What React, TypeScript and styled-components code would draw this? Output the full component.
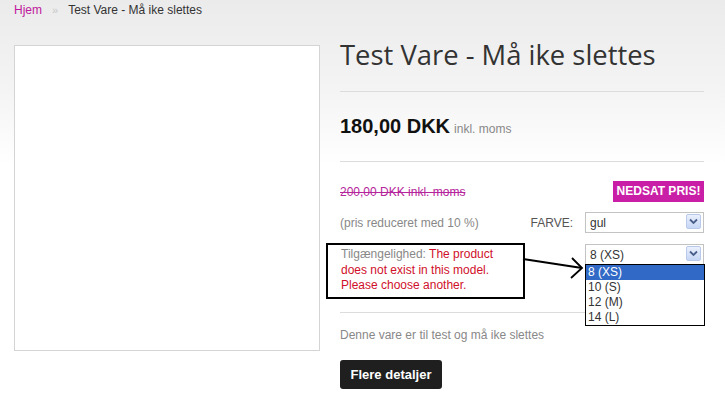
import React from 'react'
import styled, { createGlobalStyle } from 'styled-components'

const Global = createGlobalStyle`
  html, body { margin: 0; padding: 0; }
  body {
    background: linear-gradient(180deg, #ebebeb 0px, #f4f4f4 90px, #ffffff 165px, #ffffff 100%);
    font-family: "Liberation Sans", Arial, sans-serif;
    font-size: 12px;
    color: #333;
    min-height: 406px;
  }
`

const Page = styled.div`
  width: 725px;
  height: 406px;
  overflow: hidden;
  position: relative;
`

const Crumbs = styled.div`
  display: flex;
  align-items: center;
  gap: 10px;
  padding: 3px 14px 0;
  line-height: 15px;
  font-size: 12px;
  color: #333;
`

const CrumbLink = styled.a`
  color: #c0189c;
  text-decoration: none;
`

const CrumbSep = styled.span`
  color: #c8c8c8;
  font-size: 11px;
`

const Main = styled.div`
  display: flex;
  gap: 20px;
  padding: 27px 14px 0;
`

const ImageBox = styled.div`
  width: 304px;
  height: 304px;
  flex: none;
  background: #fff;
  border: 1px solid #d4d4d4;
`

const Info = styled.div`
  width: 364px;
  display: flex;
  flex-direction: column;
`

const Title = styled.h1`
  margin: -9px 0 0;
  font-family: "Open Sans", sans-serif;
  font-weight: 400;
  font-size: 27.4px;
  line-height: 38px;
  color: #333;
  white-space: nowrap;
`

const Rule = styled.hr<{ $top: number }>`
  border: 0;
  border-top: 1px solid #dcdcdc;
  margin: ${p => p.$top}px 0 0;
  height: 0;
`

const PriceRow = styled.div`
  display: flex;
  align-items: baseline;
  gap: 4px;
  margin-top: 22px;
  line-height: 24px;
`

const Price = styled.span`
  font-size: 20px;
  font-weight: 700;
  color: #111;
`

const Muted = styled.span`
  font-size: 12px;
  color: #888;
`

const Row = styled.div<{ $top: number }>`
  display: flex;
  align-items: center;
  justify-content: space-between;
  margin-top: ${p => p.$top}px;
`

const OldPrice = styled.span`
  color: #b5259b;
  text-decoration: line-through;
  font-size: 12px;
`

const Badge = styled.span`
  background: #c91fa6;
  color: #fff;
  font-weight: 700;
  font-size: 12px;
  line-height: 21px;
  width: 91px;
  white-space: nowrap;
  text-align: center;
`

const Note = styled.span`
  color: #888;
  font-size: 12px;
`

const Field = styled.div`
  display: flex;
  align-items: center;
  gap: 12px;
  color: #555;
`

const SelectBox = styled.div<{ $w: number }>`
  position: relative;
  width: ${p => p.$w}px;
  height: 21px;
  box-sizing: border-box;
  border: 1px solid #c3c3c3;
  background: #fff;
  display: flex;
  align-items: center;
  padding-left: 4px;
  color: #333;
  font-size: 12px;
`

const ArrowBtn = styled.div`
  position: absolute;
  right: 2px;
  top: 1px;
  width: 15px;
  height: 15px;
  box-sizing: border-box;
  border: 1px solid #b9c9ea;
  border-radius: 2px;
  background: linear-gradient(180deg, #eaf0fc 0%, #c6d6f6 100%);
  display: flex;
  align-items: center;
  justify-content: center;
`

const Annot = styled.div`
  width: 199px;
  height: 56px;
  box-sizing: border-box;
  margin-left: -14px;
  border: 2px solid #000;
  padding: 2px 17px 0 13px;
  line-height: 15.5px;
  font-size: 12px;
`

const Label = styled.span`
  color: #888;
`

const Warn = styled.span`
  color: #d0102a;
`

const SizeWrap = styled.div`
  position: relative;
  align-self: flex-start;
  margin-top: 1px;
`

const List = styled.ul`
  position: absolute;
  left: 0;
  top: 20px;
  width: 118px;
  margin: 0;
  padding: 0;
  list-style: none;
  background: #fff;
  border: 1px solid #000;
  z-index: 3;
`

const Opt = styled.li<{ $on?: boolean }>`
  height: 15px;
  line-height: 15px;
  padding-left: 2px;
  font-size: 12px;
  color: ${p => (p.$on ? '#fff' : '#333')};
  background: ${p => (p.$on ? '#3169c6' : '#fff')};
`

const Pointer = styled.svg`
  position: absolute;
  left: 520px;
  top: 254px;
  z-index: 4;
`

const Desc = styled.p`
  margin: 15px 0 0;
  color: #888;
  font-size: 12px;
  line-height: 15px;
`

const Button = styled.button`
  margin-top: 17px;
  align-self: flex-start;
  width: 102px;
  height: 29px;
  border: 0;
  border-radius: 3px;
  background: #1f1f1f;
  color: #fff;
  font-family: "Liberation Sans", Arial, sans-serif;
  font-weight: 700;
  font-size: 13px;
  cursor: pointer;
`

const Chevron = () => (
  <svg width="9" height="7" viewBox="0 0 9 7">
    <path d="M1 1.5 L4.5 5 L8 1.5" fill="none" stroke="#4a5f8a" strokeWidth="1.8" />
  </svg>
)

const sizes = ['8 (XS)', '10 (S)', '12 (M)', '14 (L)']

export default function App() {
  return (
    <Page>
      <Global />
      <Crumbs>
        <CrumbLink href="#">Hjem</CrumbLink>
        <CrumbSep>»</CrumbSep>
        <span>Test Vare - Må ike slettes</span>
      </Crumbs>
      <Main>
        <ImageBox />
        <Info>
          <Title>Test Vare - Må ike slettes</Title>
          <Rule $top={17} />
          <PriceRow>
            <Price>180,00 DKK</Price>
            <Muted>inkl. moms</Muted>
          </PriceRow>
          <Rule $top={20} />
          <Row $top={19}>
            <OldPrice>200,00 DKK inkl. moms</OldPrice>
            <Badge>NEDSAT PRIS!</Badge>
          </Row>
          <Row $top={10}>
            <Note>(pris reduceret med 10 %)</Note>
            <Field>
              <span>FARVE:</span>
              <SelectBox $w={119}>
                gul
                <ArrowBtn><Chevron /></ArrowBtn>
              </SelectBox>
            </Field>
          </Row>
          <Row $top={10}>
            <Annot>
              <Label>Tilgængelighed: </Label>
              <Warn>The product does not exist in this model. Please choose another.</Warn>
            </Annot>
            <SizeWrap>
              <SelectBox $w={119}>
                8 (XS)
                <ArrowBtn><Chevron /></ArrowBtn>
              </SelectBox>
              <List>
                {sizes.map((s, i) => (
                  <Opt key={s} $on={i === 0}>{s}</Opt>
                ))}
              </List>
            </SizeWrap>
          </Row>
          <Rule $top={13} />
          <Desc>Denne vare er til test og må ike slettes</Desc>
          <Button>Flere detaljer</Button>
        </Info>
      </Main>
      <Pointer width="66" height="30" viewBox="0 0 66 30">
        <path d="M3 5 L62 14" stroke="#000" strokeWidth="2.2" fill="none" />
        <path d="M52 4 L62 14 L51 24" stroke="#000" strokeWidth="1.8" fill="none" />
      </Pointer>
    </Page>
  )
}
